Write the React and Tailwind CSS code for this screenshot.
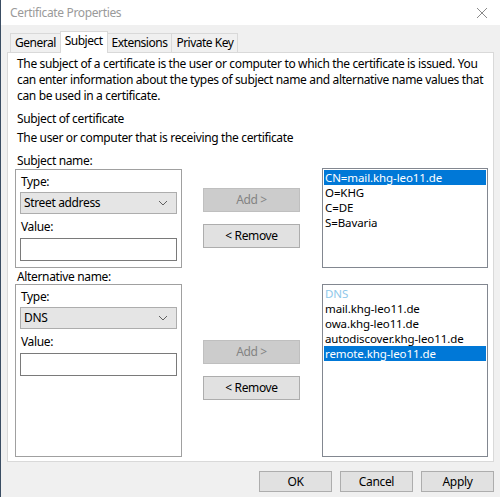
import React from 'react';

const tabs = ['General', 'Subject', 'Extensions', 'Private Key'];

function Chevron() {
  return (
    <svg width="10" height="6" viewBox="0 0 10 6" className="shrink-0">
      <path d="M1 1 L5 5 L9 1" fill="none" stroke="#606060" strokeWidth="1" />
    </svg>
  );
}

function SelectBox({ value }) {
  return (
    <div className="mx-[4px] mt-[2px] h-[22px] flex items-center justify-between border border-[#adadad] bg-[#e5e5e5] pl-[3px] pr-[8px]">
      <span>{value}</span>
      <Chevron />
    </div>
  );
}

function GroupBox({ type, tall }) {
  return (
    <div className={`w-[167px] ${tall ? 'h-[173px]' : 'h-[99px]'} border border-[#a0a0a0] flex flex-col`}>
      <div className="h-[16px] mt-[4px] ml-[5px] leading-[16px]">Type:</div>
      <SelectBox value={type} />
      <div className="h-[16px] mt-[5px] ml-[5px] leading-[16px]">Value:</div>
      <div className="mx-[4px] mt-[3px] h-[23px] border border-[#7a7a7a] bg-white" />
    </div>
  );
}

function Buttons({ top }) {
  return (
    <div className={`w-[97px] ml-[21px] ${top} flex flex-col gap-[12px]`}>
      <div className="h-[24px] flex items-center justify-center border border-[#bfbfbf] bg-[#cccccc] text-[#838383]">Add &gt;</div>
      <div className="h-[24px] flex items-center justify-center border border-[#adadad] bg-[#e1e1e1]">&lt; Remove</div>
    </div>
  );
}

function ListBox({ items, tall, header }) {
  return (
    <div className={`w-[166px] ml-[22px] ${tall ? 'h-[173px]' : 'h-[100px]'} border border-[#828790] bg-white p-[1px] flex flex-col text-[11.5px] tracking-[-0.1px] leading-[15px]`}>
      {header && <div className="h-[15px] pl-[1px] text-[#8fc8ea] overflow-hidden">{header}</div>}
      {items.map(([t, sel]) => (
        <div key={t} className={`h-[15px] pl-[1px] overflow-hidden ${sel ? 'bg-[#0078d7] text-white' : ''}`}>{t}</div>
      ))}
    </div>
  );
}

export default function App() {
  return (
    <div className="w-[500px] h-[497px] bg-[#f0f0f0] border-l border-[#3a4d63] flex flex-col text-[12px] tracking-[-0.35px] text-black font-['Segoe_UI','Noto_Sans',sans-serif] overflow-hidden">
      {/* title bar */}
      <div className="h-[25px] bg-white flex items-center justify-between pl-[9px] pr-[12px]">
        <span className="text-[12px] text-[#9a9a9a]">Certificate Properties</span>
        <svg width="12" height="12" viewBox="0 0 12 12">
          <path d="M1 1 L11 11 M11 1 L1 11" stroke="#8a8a8a" strokeWidth="1" />
        </svg>
      </div>

      {/* tabs */}
      <div className="h-[27px] flex items-end pl-[9px] tracking-[-0.5px]">
        {tabs.map(t =>
          t === 'Subject' ? (
            <div key={t} className="h-[22px] -mb-[1px] -ml-[1px] px-[4px] bg-white border border-b-0 border-[#d9d9d9] relative z-10 leading-[18px]">{t}</div>
          ) : (
            <div key={t} className={`h-[19px] px-[4px] border border-b-0 border-[#d9d9d9] leading-[18px] ${t === 'General' ? '' : '-ml-[1px]'}`}>{t}</div>
          )
        )}
      </div>

      {/* panel */}
      <div className="ml-[6px] mr-[6px] h-[410px] bg-white border border-[#d9d9d9] flex flex-col">
        <p className="pl-[9px] pr-[8px] pt-[3px] leading-[16px]">
          The subject of a certificate is the user or computer to which the certificate is issued. You can enter information about the types of subject name and alternative name values that can be used in a certificate.
        </p>
        <div className="pl-[9px] mt-[7px] leading-[16px]">Subject of certificate</div>
        <div className="pl-[9px] mt-[3px] leading-[16px]">The user or computer that is receiving the certificate</div>
        <div className="pl-[9px] mt-[7px] leading-[16px]">Subject name:</div>

        <div className="flex items-start pl-[7px]">
          <GroupBox type="Street address" />
          <Buttons top="mt-[19px]" />
          <div className="-mt-[1px]">
            <ListBox items={[['CN=mail.khg-leo11.de', true], ['O=KHG'], ['C=DE'], ['S=Bavaria']]} />
          </div>
        </div>

        <div className="pl-[9px] mt-[1px] h-[15px] leading-[15px]">Alternative name:</div>

        <div className="flex items-start pl-[7px]">
          <GroupBox type="DNS" tall />
          <Buttons top="mt-[56px]" />
          <ListBox
            tall
            header="DNS"
            items={[['mail.khg-leo11.de'], ['owa.khg-leo11.de'], ['autodiscover.khg-leo11.de'], ['remote.khg-leo11.de', true]]}
          />
        </div>
      </div>

      {/* bottom buttons */}
      <div className="flex justify-end gap-[8px] pr-[6px] mt-[9px]">
        {['OK', 'Cancel', 'Apply'].map(b => (
          <div key={b} className="w-[73px] h-[21px] flex items-center justify-center border border-[#adadad] bg-[#e1e1e1]">{b}</div>
        ))}
      </div>
    </div>
  );
}
